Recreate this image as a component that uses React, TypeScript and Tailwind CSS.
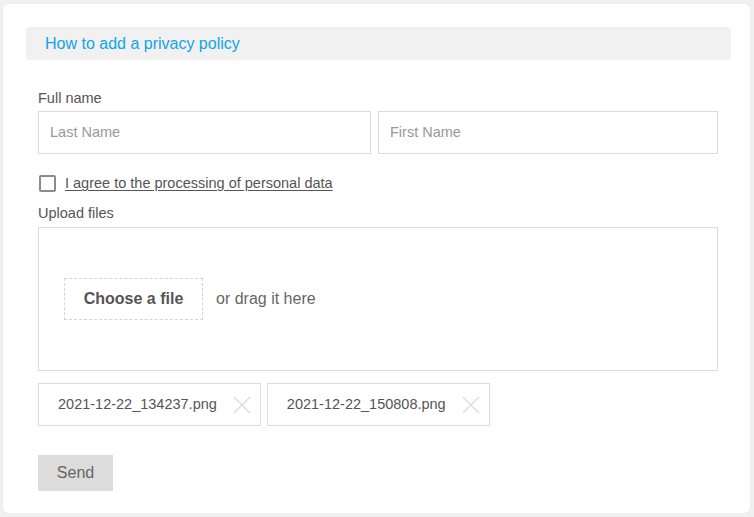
import React from "react";

function XIcon() {
  return (
    <svg width="18" height="18" viewBox="0 0 18 18" className="shrink-0">
      <path d="M1 1 L17 17 M17 1 L1 17" stroke="#dcdcdc" strokeWidth="1.4" fill="none" />
    </svg>
  );
}

export default function App() {
  const files = ["2021-12-22_134237.png", "2021-12-22_150808.png"];
  return (
    <div
      className="w-[754px] h-[517px] bg-[#f0f0f0] pt-[4px] pl-[3px] pr-[4px] pb-[4px]"
      style={{ fontFamily: '"Liberation Sans", Arial, sans-serif' }}
    >
      <div className="h-[509px] bg-white rounded-[6px] pt-[23px] pl-[23px] pr-[19px]">
        <div className="h-[33px] bg-[#f1f1f1] rounded-[4px] flex items-center pl-[19px]">
          <span className="text-[16px] text-[#0ea5ea]">How to add a privacy policy</span>
        </div>
        <div className="pl-[12px] pr-[13px]">
          <div className="mt-[30px] text-[14.5px] text-[#555] leading-[16px]">Full name</div>
          <div className="mt-[5px] flex gap-[7px]">
            <div className="w-[333px] h-[43px] border border-[#dcdcdc] flex items-center pl-[11px] text-[14.5px] text-[#999]">
              Last Name
            </div>
            <div className="flex-1 h-[43px] border border-[#dcdcdc] flex items-center pl-[11px] text-[14.5px] text-[#999]">
              First Name
            </div>
          </div>
          <div className="mt-[21px] h-[17px] flex items-center">
            <div className="w-[17px] h-[17px] border-2 border-[#8a8a94] rounded-[2px] ml-[1px]" />
            <span className="ml-[9px] text-[14.5px] leading-[17px] text-[#555] underline underline-offset-2">
              I agree to the processing of personal data
            </span>
          </div>
          <div className="mt-[13px] text-[14.5px] text-[#555] leading-[16px]">Upload files</div>
          <div className="mt-[6px] h-[144px] border border-[#dcdcdc] flex items-center pl-[25px]">
            <div className="w-[139px] h-[42px] border border-dashed border-[#d4d4d4] flex items-center justify-center text-[16px] font-bold text-[#555]">
              Choose a file
            </div>
            <span className="ml-[13px] text-[16px] text-[#666]">or drag it here</span>
          </div>
          <div className="mt-[12px] flex gap-[6px]">
            {files.map((f) => (
              <div
                key={f}
                className="h-[43px] border border-[#dcdcdc] flex items-center pl-[19px] pr-[9px] gap-[16px] text-[14.5px] text-[#555]"
              >
                <span>{f}</span>
                <XIcon />
              </div>
            ))}
          </div>
          <div className="mt-[29px] w-[75px] h-[36px] bg-[#dcdcdc] flex items-center justify-center text-[16px] text-[#666]">
            Send
          </div>
        </div>
      </div>
    </div>
  );
}
